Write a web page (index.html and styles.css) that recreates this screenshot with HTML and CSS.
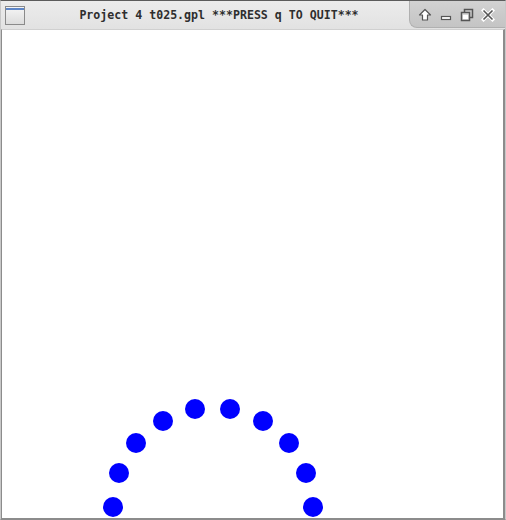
FILE: index.html
```html
<!DOCTYPE html>
<html>
<head>
<meta charset="utf-8">
<link rel="stylesheet" href="styles.css">
</head>
<body>
<div class="window">
  <div class="titlebar">
    <div class="app-icon"><div class="app-icon-bar"></div></div>
    <div class="title">Project 4 t025.gpl ***PRESS q TO QUIT***</div>
    <div class="controls">
      <svg class="ctl" width="14" height="14" viewBox="0 0 14 14"><path d="M7 1.5 L12.5 7 L9.5 7 L9.5 12 L4.5 12 L4.5 7 L1.5 7 Z" fill="#fff" stroke="#555" stroke-width="1.2" stroke-linejoin="round"/></svg>
      <svg class="ctl" width="14" height="14" viewBox="0 0 14 14"><rect x="2.5" y="8.5" width="9" height="3" fill="#fff" stroke="#555" stroke-width="1.2"/></svg>
      <svg class="ctl" width="14" height="14" viewBox="0 0 14 14"><rect x="4.5" y="1.5" width="8" height="8" fill="none" stroke="#555" stroke-width="1.5"/><rect x="1.5" y="4.5" width="8" height="8" fill="#d8d8d8" stroke="#555" stroke-width="1.5"/><rect x="3" y="7" width="5" height="4" fill="#fff"/></svg>
      <svg class="ctl" width="14" height="14" viewBox="0 0 14 14"><path d="M2.5 2.5 L11.5 11.5 M11.5 2.5 L2.5 11.5" stroke="#fff" stroke-width="3.6" stroke-linecap="square"/><path d="M2.5 2.5 L11.5 11.5 M11.5 2.5 L2.5 11.5" stroke="#555" stroke-width="1.6"/></svg>
    </div>
  </div>
  <div class="content">
    <svg class="plot" width="501" height="487" viewBox="2 30 501 487">
      <g fill="#0000ff">
        <circle cx="113" cy="507" r="10"/>
        <circle cx="119" cy="473" r="10"/>
        <circle cx="136" cy="443" r="10"/>
        <circle cx="163" cy="421" r="10"/>
        <circle cx="195" cy="409" r="10"/>
        <circle cx="230" cy="409" r="10"/>
        <circle cx="263" cy="421" r="10"/>
        <circle cx="289" cy="443" r="10"/>
        <circle cx="306" cy="473" r="10"/>
        <circle cx="313" cy="507" r="10"/>
      </g>
    </svg>
  </div>
</div>
</body>
</html>
```

FILE: styles.css
```css
html, body {
  margin: 0;
  padding: 0;
  background: #ffffff;
}

.window {
  width: 506px;
  height: 520px;
  display: flex;
  flex-direction: column;
  box-sizing: border-box;
  border-top: 1px solid #5c5c5c;
  border-left: 1px solid #c8c8c8;
  border-right: 1px solid #c8c8c8;
  border-bottom: 1px solid #8c8c8c;
}

.titlebar {
  height: 28px;
  flex: none;
  display: flex;
  align-items: stretch;
  background: linear-gradient(#ececec, #e2e2e2);
}

.app-icon {
  width: 18px;
  height: 17px;
  margin: 5px 0 0 4px;
  border: 1px solid #8a8a8a;
  background: linear-gradient(#f6f6f6, #dcdcdc);
}

.app-icon-bar {
  height: 2px;
  margin-top: 1px;
  background: #5f87c8;
}

.title {
  flex: 1;
  text-align: center;
  font-family: "DejaVu Sans Mono", monospace;
  font-weight: bold;
  font-size: 11.6px;
  line-height: 28px;
  color: #2e2e2e;
  padding-left: 4px;
}

.controls {
  width: 96px;
  height: 27px;
  display: flex;
  align-items: center;
  justify-content: space-between;
  padding: 0 10px 0 8px;
  box-sizing: border-box;
  background: linear-gradient(#d2d2d2, #c4c4c4);
  border-left: 1px solid #b0b0b0;
  border-bottom: 1px solid #b0b0b0;
  border-bottom-left-radius: 8px;
}

.ctl {
  display: block;
  margin-top: 1px;
}

.content {
  flex: 1;
  background: #ffffff;
  border-left: 1px solid #8c8c8c;
  border-right: 2px solid #8c8c8c;
  border-bottom: 1px solid #8c8c8c;
  border-top: 1px solid #d0d0d0;
  box-sizing: border-box;
  overflow: hidden;
}

.plot {
  display: block;
}
```
